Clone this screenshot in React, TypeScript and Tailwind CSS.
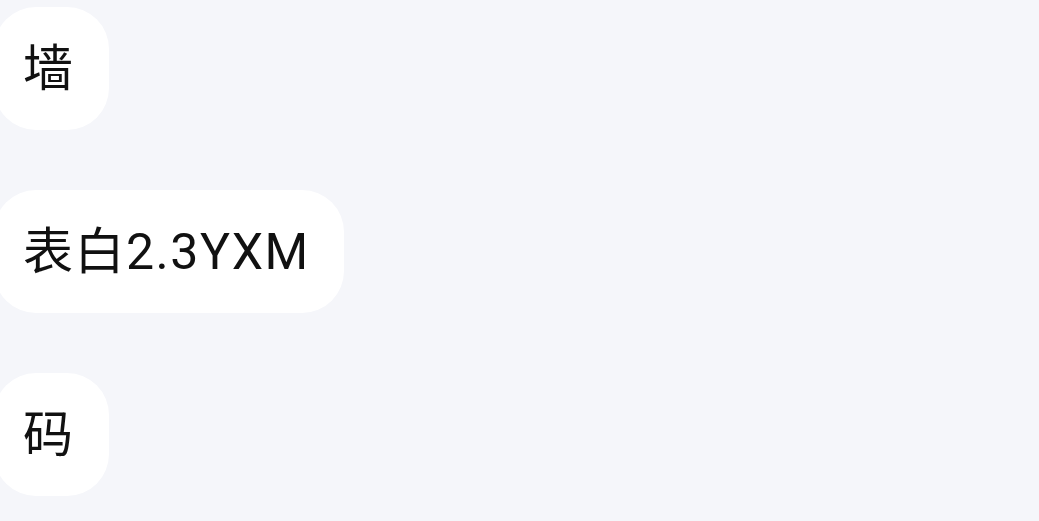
import React from 'react';

const messages = ['墙', '表白2.3YXM', '码'];

export default function App() {
  return (
    <div className="min-h-[521px] w-full bg-[#f5f6fa] pt-[7px]">
      <div className="flex flex-col items-start gap-[60px]">
        {messages.map((text) => (
          <div
            key={text}
            className="-ml-[6px] flex h-[123px] items-center rounded-[42px] bg-white pl-[29px] pr-[34px] text-[50px] leading-none tracking-[1.5px] text-[#111111]"
            style={{ fontFamily: 'Roboto, "Noto Sans CJK SC", sans-serif' }}
          >
            {text}
          </div>
        ))}
      </div>
    </div>
  );
}
